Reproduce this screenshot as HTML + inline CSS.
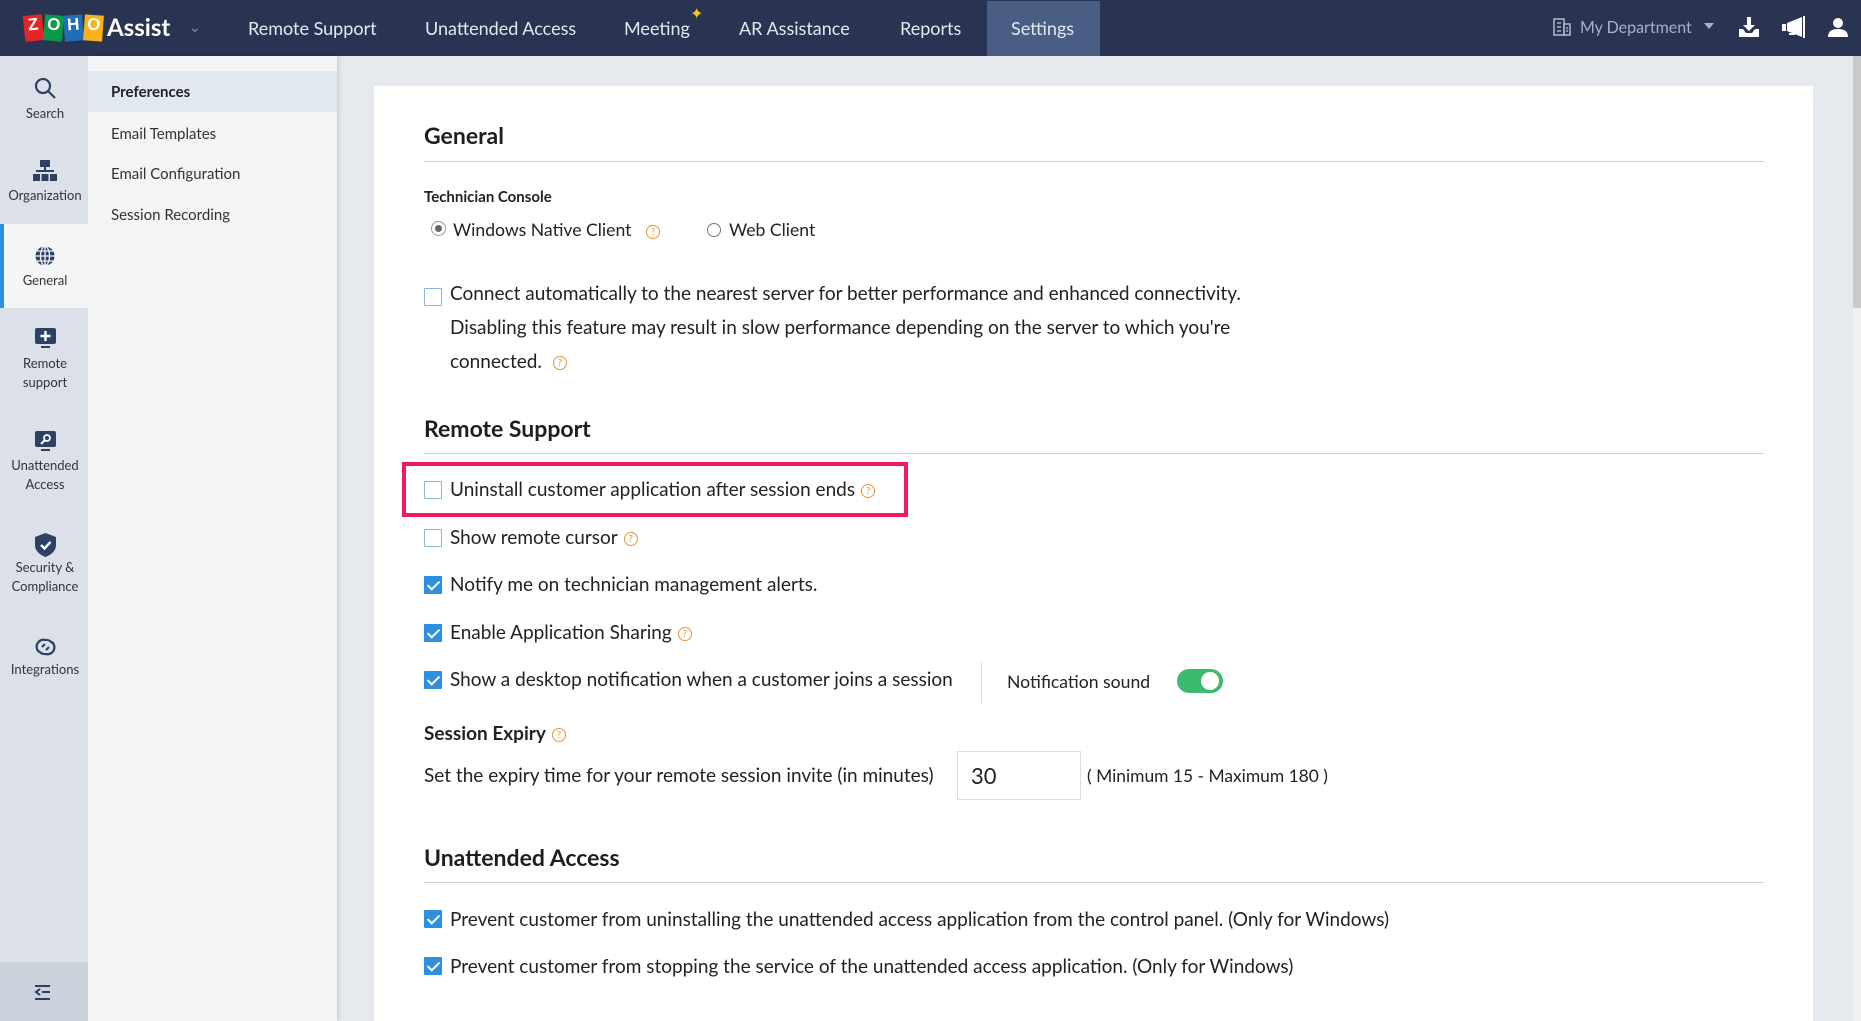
<!DOCTYPE html>
<html><head><meta charset="utf-8"><style>
*{margin:0;padding:0;box-sizing:border-box}
body{width:1861px;height:1021px;overflow:hidden;background:#e6e9ee;font-family:"Lato","Liberation Sans",sans-serif;color:#222;position:relative}
.a{position:absolute;white-space:nowrap}
.hdr{left:0;top:0;width:1861px;height:56px;background:#283452}
.nav{top:17px;font-size:18px;color:#e4e8f0}
.lb{left:0;top:56px;width:88px;height:965px;background:#dce0e8}
.ic{left:0;width:88px;text-align:center;font-size:13px;color:#333;line-height:19px}
.sub{left:88px;top:56px;width:249px;height:965px;background:#f4f4f4;box-shadow:2px 0 4px rgba(0,0,0,.12)}
.si{left:111px;font-size:15px;color:#333}
.card{left:374px;top:86px;width:1439px;height:935px;background:#fff}
.h{left:424px;font-size:23px;font-weight:bold;color:#1e1e1e}
.rule{left:424px;width:1340px;height:1px;background:#cfcfcf}
.t{font-size:19px;color:#222}
.cb{width:18px;height:18px;border:1.5px solid #8fb5e6;background:#fff;border-radius:1px}
.cb.on{background:#2d8fe0;border-color:#2d8fe0}
.cb.on::after{content:"";position:absolute;left:5px;top:1px;width:5px;height:10px;border:solid #fff;border-width:0 2px 2px 0;transform:rotate(45deg)}
.q{display:inline-block;width:14px;height:14px;border:1.3px solid #e8962e;border-radius:50%;color:#e8962e;font-size:10px;line-height:12px;text-align:center;vertical-align:middle;margin-left:6px;font-weight:normal}
</style></head><body>
<div class="a hdr"></div>
<div class="a" style="left:24px;top:15px;height:26px;display:flex;gap:1px">
<span style="background:#e42527;color:#fff;font:bold 17px 'Liberation Sans';width:19px;text-align:center;transform:rotate(-6deg)">Z</span>
<span style="background:#089949;color:#fff;font:bold 17px 'Liberation Sans';width:19px;text-align:center;transform:rotate(5deg)">O</span>
<span style="background:#226db4;color:#fff;font:bold 17px 'Liberation Sans';width:19px;text-align:center;transform:rotate(-4deg)">H</span>
<span style="background:#f9b21d;color:#fff;font:bold 17px 'Liberation Sans';width:19px;text-align:center;transform:rotate(4deg)">O</span></div>
<div class="a" style="left:107px;top:13px;font-size:24px;font-weight:bold;color:#fff">Assist</div>
<div class="a" style="left:189px;top:18px;color:#8a93a8;font-size:14px">&#8964;</div>
<div class="a nav" style="left:248px">Remote Support</div>
<div class="a nav" style="left:425px">Unattended Access</div>
<div class="a nav" style="left:624px">Meeting</div>
<div class="a" style="left:690px;top:4px;color:#f5c518;font-size:16px">✦</div>
<div class="a nav" style="left:739px">AR Assistance</div>
<div class="a nav" style="left:900px">Reports</div>
<div class="a" style="left:987px;top:1px;width:113px;height:55px;background:#4a5e85"></div>
<div class="a nav" style="left:1011px">Settings</div>
<svg class="a" style="left:1552px;top:17px" width="20" height="20" viewBox="0 0 20 20" fill="none" stroke="#aab1c2" stroke-width="1.6"><rect x="2" y="2" width="10" height="16"/><rect x="12" y="7" width="6" height="11"/><path d="M5 6h4M5 10h4M5 14h4M14 11h2M14 14h2"/></svg>
<div class="a" style="left:1580px;top:18px;font-size:16px;color:#aab1c2">My Department</div>
<div class="a" style="left:1704px;top:23px;width:0;height:0;border:5px solid transparent;border-top:6px solid #aab1c2"></div>
<svg class="a" style="left:1738px;top:16px" width="22" height="22" viewBox="0 0 22 22" fill="#fff"><path d="M9 1h4v8h4l-6 6-6-6h4z"/><path d="M1 13h4l3 4h6l3-4h4v8H1z"/></svg>
<svg class="a" style="left:1780px;top:15px" width="26" height="24" viewBox="0 0 26 24" fill="#fff"><path d="M2 9h4v7H2zM7 8l15-6v20L7 16z"/><rect x="23" y="1" width="2" height="22"/><rect x="9" y="18" width="6" height="2"/></svg>
<svg class="a" style="left:1827px;top:16px" width="22" height="22" viewBox="0 0 22 22" fill="#fff"><circle cx="11" cy="7" r="5"/><path d="M1 21c0-6 4-8 10-8s10 2 10 8z"/></svg>

<div class="a lb"></div>
<div class="a" style="left:0;top:962px;width:88px;height:59px;background:#ccd2dc"></div>
<svg class="a" style="left:34px;top:985px" width="17" height="15" viewBox="0 0 17 15" stroke="#2d4263" stroke-width="2" fill="none"><path d="M1 1h15M8 7h8M1 14h15M6 4L2 7l4 3"/></svg>
<div class="a" style="left:0;top:224px;width:88px;height:84px;background:#f4f5f7"></div>
<div class="a" style="left:0;top:224px;width:4px;height:84px;background:#2d8fe0"></div>
<svg class="a" style="left:34px;top:77px" width="23" height="23" viewBox="0 0 23 23" fill="none" stroke="#2d4263" stroke-width="2.2"><circle cx="9" cy="9" r="7"/><path d="M14 14l7 7"/></svg>
<div class="a ic" style="top:104px;left:1px">Search</div>
<svg class="a" style="left:33px;top:160px" width="24" height="22" viewBox="0 0 24 22" fill="#2d4263"><rect x="7" y="0" width="10" height="7"/><path d="M11 7h2v4h-2zM3 10h18v2H3z"/><rect x="0" y="14" width="7" height="7"/><rect x="8.5" y="14" width="7" height="7"/><rect x="17" y="14" width="7" height="7"/></svg>
<div class="a ic" style="top:186px;left:1px">Organization</div>
<svg class="a" style="left:34px;top:245px" width="22" height="22" viewBox="0 0 22 22" fill="none" stroke="#2d4263" stroke-width="2"><circle cx="11" cy="11" r="9.5" fill="#2d4263" stroke="none"/><path d="M1.5 11h19M11 1.5v19M3 6h16M3 16h16" stroke="#f4f5f7" stroke-width="1.3"/><ellipse cx="11" cy="11" rx="4.5" ry="9.5" stroke="#f4f5f7" stroke-width="1.3"/></svg>
<div class="a ic" style="top:271px;left:1px">General</div>
<svg class="a" style="left:35px;top:328px" width="21" height="21" viewBox="0 0 21 21"><rect x="0" y="0" width="21" height="16" rx="2" fill="#2d4263"/><rect x="6" y="18" width="9" height="2" fill="#2d4263"/><path d="M10.5 3v10M5.5 8h10" stroke="#fff" stroke-width="2.4"/></svg>
<div class="a ic" style="top:354px;left:1px">Remote<br>support</div>
<svg class="a" style="left:35px;top:431px" width="21" height="21" viewBox="0 0 21 21"><rect x="0" y="0" width="21" height="16" rx="2" fill="#2d4263"/><rect x="6" y="18" width="9" height="2" fill="#2d4263"/><circle cx="12" cy="7" r="3" fill="none" stroke="#fff" stroke-width="1.8"/><path d="M10 9l-4 4" stroke="#fff" stroke-width="2"/></svg>
<div class="a ic" style="top:456px;left:1px">Unattended<br>Access</div>
<svg class="a" style="left:35px;top:533px" width="21" height="24" viewBox="0 0 21 24"><path d="M10.5 0L21 4v8c0 6-5 10-10.5 12C5 22 0 18 0 12V4z" fill="#2d4263"/><path d="M6 12l3.5 3.5L15.5 9" stroke="#fff" stroke-width="2.4" fill="none"/></svg>
<div class="a ic" style="top:558px;left:1px">Security &amp;<br>Compliance</div>
<svg class="a" style="left:34px;top:637px" width="23" height="20" viewBox="0 0 23 20" fill="none" stroke="#2d4263" stroke-width="2.2"><path d="M5 15A7 7 0 0 1 11.5 3 7 7 0 0 1 18 6M18 5a7 7 0 0 1-6.5 12A7 7 0 0 1 5 14"/><path d="M8 10l3 -3M12 13l3-3"/></svg>
<div class="a ic" style="top:660px;left:1px">Integrations</div>

<div class="a sub"></div>
<div class="a" style="left:88px;top:71px;width:249px;height:41px;background:#e1e8f0"></div>
<div class="a si" style="top:83px;font-weight:bold;color:#222">Preferences</div>
<div class="a si" style="top:125px">Email Templates</div>
<div class="a si" style="top:165px">Email Configuration</div>
<div class="a si" style="top:206px">Session Recording</div>

<div class="a" style="left:1853px;top:56px;width:8px;height:965px;background:#f1f1f1"></div>
<div class="a" style="left:1853px;top:56px;width:8px;height:252px;background:#c9c9c9"></div>

<div class="a card"></div>
<div class="a h" style="top:121px">General</div>
<div class="a rule" style="top:161px"></div>
<div class="a" style="left:424px;top:188px;font-size:15px;font-weight:bold">Technician Console</div>
<div class="a" style="left:431px;top:221px;width:15px;height:15px;border-radius:50%;border:1.5px solid #999;background:#fff"><div style="margin:2.5px;width:7px;height:7px;border-radius:50%;background:#666"></div></div>
<div class="a" style="left:453px;top:219px;font-size:17.6px">Windows Native Client <span class="q" style="margin-left:10px">?</span></div>
<div class="a" style="left:707px;top:223px;width:14px;height:14px;border-radius:50%;border:1.5px solid #777;background:#fff"></div>
<div class="a" style="left:729px;top:219px;font-size:17.6px">Web Client</div>
<div class="a cb" style="left:424px;top:288px"></div>
<div class="a t" style="left:450px;top:277px;line-height:34px">Connect automatically to the nearest server for better performance and enhanced connectivity.<br>Disabling this feature may result in slow performance depending on the server to which you're<br>connected. <span class="q">?</span></div>

<div class="a h" style="top:414px">Remote Support</div>
<div class="a rule" style="top:453px"></div>
<div class="a" style="left:402px;top:462px;width:506px;height:55px;border:4px solid #ee1c5e"></div>
<div class="a cb" style="left:424px;top:481px"></div>
<div class="a t" style="left:450px;top:478px">Uninstall customer application after session ends<span class="q">?</span></div>
<div class="a cb" style="left:424px;top:529px"></div>
<div class="a t" style="left:450px;top:526px">Show remote cursor<span class="q">?</span></div>
<div class="a cb on" style="left:424px;top:576px"></div>
<div class="a t" style="left:450px;top:573px">Notify me on technician management alerts.</div>
<div class="a cb on" style="left:424px;top:624px"></div>
<div class="a t" style="left:450px;top:621px">Enable Application Sharing<span class="q">?</span></div>
<div class="a cb on" style="left:424px;top:671px"></div>
<div class="a t" style="left:450px;top:668px">Show a desktop notification when a customer joins a session</div>
<div class="a" style="left:981px;top:662px;width:1px;height:41px;background:#ddd"></div>
<div class="a" style="left:1007px;top:671px;font-size:17.6px">Notification sound</div>
<div class="a" style="left:1177px;top:669px;width:46px;height:24px;border-radius:12px;background:#3cba6f"><div style="position:absolute;right:4px;top:3px;width:18px;height:18px;border-radius:50%;background:#fff"></div></div>
<div class="a" style="left:424px;top:722px;font-size:19px;font-weight:bold">Session Expiry<span class="q">?</span></div>
<div class="a t" style="left:424px;top:764px">Set the expiry time for your remote session invite (in minutes)</div>
<div class="a" style="left:957px;top:751px;width:124px;height:49px;border:1px solid #ddd;font-size:22px;padding:10px 0 0 13px">30</div>
<div class="a" style="left:1087px;top:765px;font-size:17.4px">( Minimum 15 - Maximum 180 )</div>

<div class="a h" style="top:843px">Unattended Access</div>
<div class="a rule" style="top:882px"></div>
<div class="a cb on" style="left:424px;top:910px"></div>
<div class="a t" style="left:450px;top:908px">Prevent customer from uninstalling the unattended access application from the control panel. (Only for Windows)</div>
<div class="a cb on" style="left:424px;top:957px"></div>
<div class="a t" style="left:450px;top:955px">Prevent customer from stopping the service of the unattended access application. (Only for Windows)</div>
</body></html>
